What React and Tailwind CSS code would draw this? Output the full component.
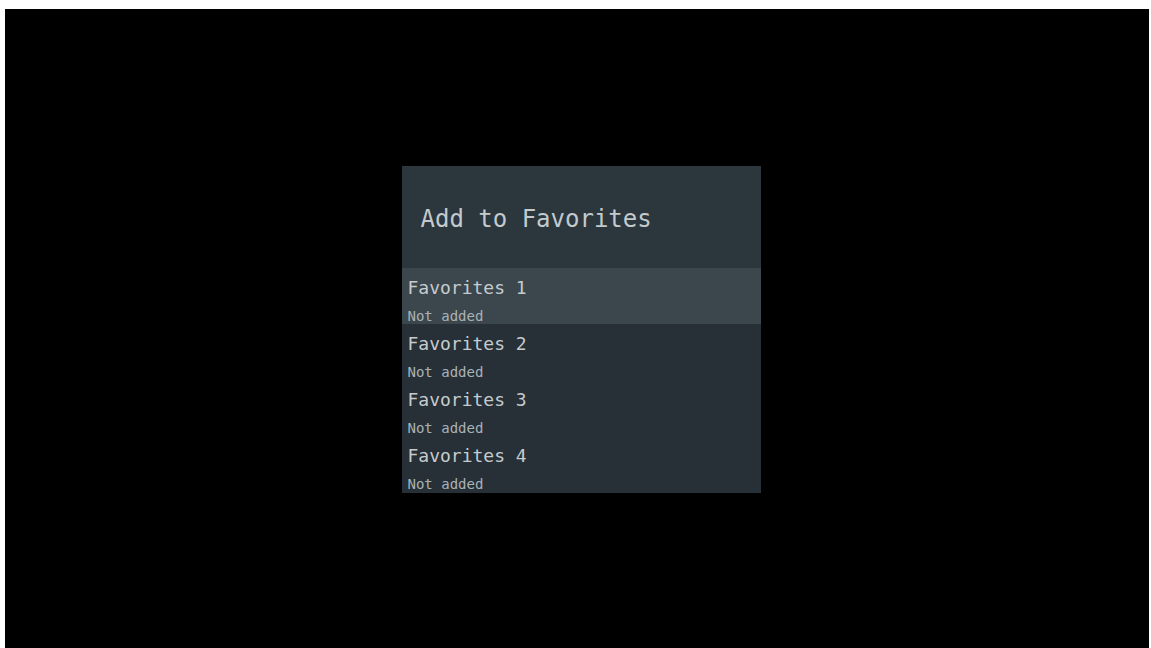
const items = ["Favorites 1", "Favorites 2", "Favorites 3", "Favorites 4"];

export default function App() {
  return (
    <div className="h-[648px] w-[1151px] bg-white pt-[9px] pl-[5px] pr-[2px]">
      <div
        className="flex h-[639px] items-center justify-center bg-black pl-[8px] pt-px"
        style={{ fontFamily: '"DejaVu Sans Mono", "Liberation Mono", monospace' }}
      >
        <div className="w-[359px] bg-[#263036]">
          <div className="flex h-[102px] items-center bg-[#2b373d] pl-[19px] pt-[5px]">
            <h1 className="text-[24px] leading-8 text-[#c3cacd]">Add to Favorites</h1>
          </div>
          <div className="pb-px">
            {items.map((name, i) => (
              <div
                key={name}
                className={
                  "h-[56px] pl-[6px] pt-2 " + (i === 0 ? "bg-[#3c474d]" : "bg-[#263036]")
                }
              >
                <div className="text-[18px] leading-6 text-[#c5cbce]">{name}</div>
                <div className="mt-2 text-[14px] leading-4 text-[#aab2b6]">Not added</div>
              </div>
            ))}
          </div>
        </div>
      </div>
    </div>
  );
}
